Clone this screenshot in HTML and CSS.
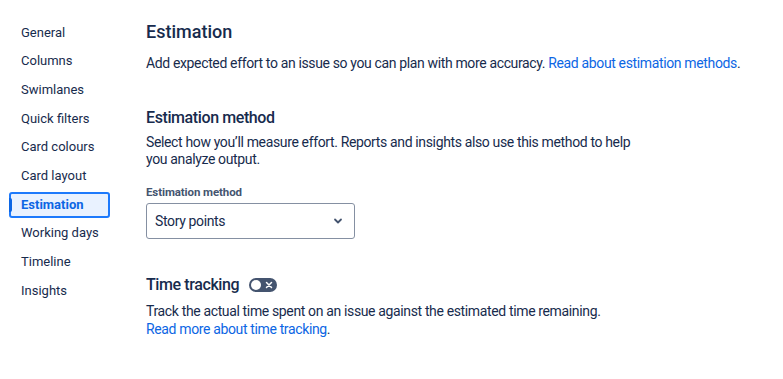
FILE: index.html
```html
<!DOCTYPE html>
<html lang="en">
<head>
  <meta charset="UTF-8">
  <title>Board settings - Estimation</title>
  <link rel="stylesheet" href="styles.css">
</head>
<body>
  <div class="layout">
    <nav class="sidebar">
      <a class="nav-item" href="#">General</a>
      <a class="nav-item" href="#">Columns</a>
      <a class="nav-item" href="#">Swimlanes</a>
      <a class="nav-item" href="#">Quick filters</a>
      <a class="nav-item" href="#">Card colours</a>
      <a class="nav-item" href="#">Card layout</a>
      <a class="nav-item active" href="#">Estimation</a>
      <a class="nav-item" href="#">Working days</a>
      <a class="nav-item" href="#">Timeline</a>
      <a class="nav-item" href="#">Insights</a>
    </nav>

    <main class="content">
      <h1>Estimation</h1>
      <p class="lead">Add expected effort to an issue so you can plan with more accuracy. <a href="#">Read about estimation methods</a>.</p>

      <section class="section">
        <h2>Estimation method</h2>
        <p class="desc">Select how you’ll measure effort. Reports and insights also use this method to help you analyze output.</p>
        <label class="field-label">Estimation method</label>
        <div class="select">
          <span>Story points</span>
          <svg width="16" height="16" viewBox="0 0 16 16">
            <path d="M5 6.5l3 3 3-3" fill="none" stroke="#44546f" stroke-width="1.8" stroke-linecap="round" stroke-linejoin="round"/>
          </svg>
        </div>
      </section>

      <section class="section tracking">
        <div class="title-row">
          <h2>Time tracking</h2>
          <span class="toggle">
            <span class="knob"></span>
            <svg width="8" height="8" viewBox="0 0 8 8">
              <path d="M1.5 1.5l5 5M6.5 1.5l-5 5" stroke="#fff" stroke-width="1.5" stroke-linecap="round"/>
            </svg>
          </span>
        </div>
        <p class="desc">Track the actual time spent on an issue against the estimated time remaining.<br><a href="#">Read more about time tracking</a>.</p>
      </section>
    </main>
  </div>
</body>
</html>
```

FILE: styles.css
```css
:root {
  --text: #172b4d;
  --subtle: #44546f;
  --link: #0c66e4;
  --selected-bg: #e9f2ff;
  --border: #8590a2;
}

* {
  box-sizing: border-box;
  margin: 0;
  padding: 0;
}

body {
  font-family: Roboto, 'Liberation Sans', Arial, sans-serif;
  color: var(--text);
  background: #fff;
  font-size: 14px;
}

a {
  color: var(--link);
  text-decoration: none;
}

.layout {
  display: flex;
  padding: 19.5px 0 0 9px;
}

.sidebar {
  display: flex;
  flex-direction: column;
  gap: 2.7px;
  width: 101px;
  flex-shrink: 0;
}

.nav-item {
  display: block;
  height: 26px;
  line-height: 22px;
  padding-left: 10px;
  font-size: 13px;
  color: var(--text);
  border-radius: 3px;
  border: 2px solid transparent;
}

.nav-item.active {
  background: var(--selected-bg);
  border-color: #1d7afc;
  color: var(--link);
  font-weight: 700;
  position: relative;
}

.nav-item.active::before {
  content: '';
  position: absolute;
  left: -2px;
  top: 4px;
  bottom: 4px;
  width: 3px;
  background: var(--link);
  border-radius: 0 2px 2px 0;
}

.content {
  margin-left: 36px;
  padding-top: 0.5px;
  letter-spacing: -0.36px;
}

h1 {
  font-size: 18px;
  font-weight: 500;
  line-height: 24px;
  letter-spacing: 0;
  margin-bottom: 9px;
}

.lead {
  line-height: 20px;
}

.section {
  margin-top: 35px;
}

h2 {
  font-size: 16px;
  font-weight: 500;
  line-height: 20px;
  letter-spacing: -0.4px;
}

.desc {
  margin-top: 6px;
  line-height: 17px;
  max-width: 485px;
}

.field-label {
  display: block;
  margin-top: 16px;
  font-size: 11.5px;
  font-weight: 700;
  color: var(--subtle);
  line-height: 16px;
  letter-spacing: -0.1px;
}

.select {
  margin-top: 3px;
  width: 209px;
  height: 36px;
  border: 1px solid var(--border);
  border-radius: 3px;
  display: flex;
  align-items: center;
  justify-content: space-between;
  padding: 0 8px 0 8px;
  font-size: 14px;
}

.tracking {
  margin-top: 36px;
}

.title-row {
  display: flex;
  align-items: center;
  gap: 10px;
}

.toggle {
  width: 28px;
  height: 14px;
  border-radius: 7px;
  background: var(--subtle);
  display: flex;
  align-items: center;
  justify-content: flex-end;
  padding: 0 4px;
  position: relative;
}

.toggle .knob {
  position: absolute;
  left: 2px;
  top: 2px;
  width: 10px;
  height: 10px;
  border-radius: 50%;
  background: #fff;
}

.tracking .desc {
  margin-top: 7px;
  line-height: 18px;
}
```
